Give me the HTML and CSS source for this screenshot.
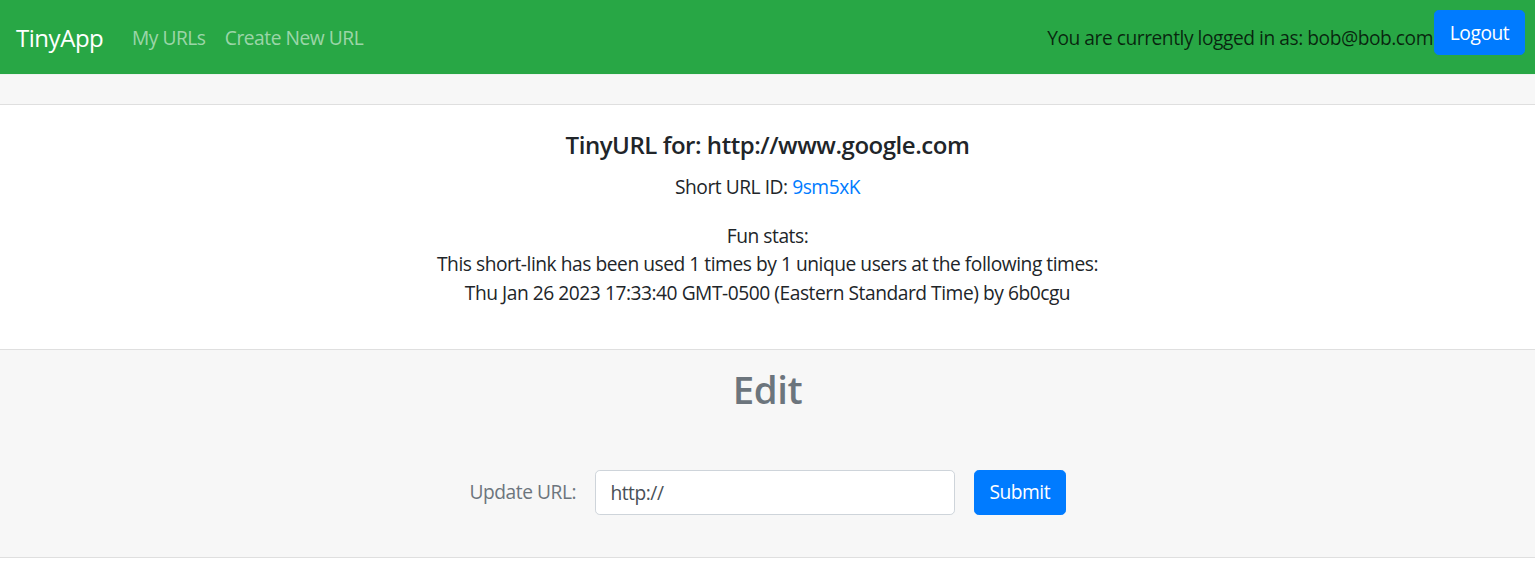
FILE: index.html
```html
<!DOCTYPE html>
<html lang="en">
<head>
<meta charset="utf-8">
<title>TinyApp</title>
<link rel="stylesheet" href="styles.css">
</head>
<body>
<nav class="navbar">
  <a class="brand" href="#">TinyApp</a>
  <div class="nav-links">
    <a class="nav-link" href="#">My URLs</a>
    <a class="nav-link" href="#">Create New URL</a>
  </div>
  <div class="nav-right">
    <span class="nav-text">You are currently logged in as: bob@bob.com</span>
    <button class="btn btn-primary btn-logout" type="button">Logout</button>
  </div>
</nav>
<main class="card">
  <div class="card-header"></div>
  <div class="card-body">
    <h5 class="card-title">TinyURL for: http://www.google.com</h5>
    <p class="short-id">Short URL ID: <a class="link" href="#">9sm5xK</a></p>
    <p class="stats">Fun stats:<br>This short-link has been used 1 times by 1 unique users at the following times:<br>Thu Jan 26 2023 17:33:40 GMT-0500 (Eastern Standard Time) by 6b0cgu</p>
  </div>
  <div class="card-footer">
    <h2 class="edit-title">Edit</h2>
    <form class="edit-form">
      <label class="form-label" for="longURL">Update URL:</label>
      <input class="form-input" id="longURL" type="text" value="http://">
      <button class="btn btn-primary" type="submit">Submit</button>
    </form>
  </div>
</main>
</body>
</html>
```
FILE: styles.css
```css
* { box-sizing: border-box; }
body {
  margin: 0;
  font-family: "Open Sans", "Noto Sans", sans-serif;
  font-size: 19.2px;
  line-height: 28.8px;
  letter-spacing: -0.024em;
  color: #212529;
  background: #fff;
}
a { text-decoration: none; }

.navbar {
  display: flex;
  align-items: center;
  height: 74px;
  padding: 0 10px 0 16px;
  background: #28a745;
}
.brand {
  font-size: 24px;
  line-height: 30px;
  color: #fff;
  margin-right: 19px;
  padding-top: 1px;
}
.nav-links { display: flex; padding-top: 2px; }
.nav-link {
  color: rgba(255, 255, 255, 0.55);
  padding: 0 9.6px;
}
.nav-right {
  margin-left: auto;
  display: flex;
  align-items: flex-start;
  align-self: stretch;
}
.nav-text {
  color: rgba(0, 0, 0, 0.78);
  margin-top: 24px;
  margin-right: 1px;
}
.btn {
  font-family: inherit;
  font-size: 19.2px;
  line-height: 28.8px;
  letter-spacing: -0.024em;
  border: 1px solid transparent;
  border-radius: 4.8px;
  padding: 7.2px 14.4px;
  height: 45px;
  cursor: pointer;
}
.btn-primary {
  background: #007bff;
  border-color: #007bff;
  color: #fff;
}
.btn-logout {
  margin-top: 10px;
  width: 91px;
  padding-top: 8px;
}

.card {
  display: block;
  border-top: 1px solid #eef3ef;
  border-bottom: 1px solid #dfdfdf;
}
.card-header {
  height: 30px;
  background: #f7f7f7;
  border-bottom: 1px solid #dfdfdf;
}
.card-body {
  text-align: center;
  padding: 25.6px 24px 21px;
  height: 244px;
}
.card-title {
  margin: 0 0 13.2px;
  font-size: 24px;
  line-height: 28.8px;
  font-weight: 600;
}
.short-id { margin: 0 0 20.2px; }
.stats { margin: 0; }
.link { color: #007bff; }

.card-footer {
  background: #f7f7f7;
  border-top: 1px solid #dfdfdf;
  height: 208px;
  padding-top: 16px;
  text-align: center;
}
.edit-title {
  margin: 0;
  font-size: 38.4px;
  line-height: 46px;
  font-weight: 600;
  color: #6c757d;
}
.edit-form {
  display: flex;
  justify-content: center;
  align-items: center;
  gap: 19px;
  margin-top: 58px;
}
.form-label { color: #6c757d; }
.form-input {
  width: 360px;
  height: 45px;
  font-family: inherit;
  font-size: 19.2px;
  letter-spacing: -0.024em;
  color: #495057;
  padding: 7.2px 14.4px;
  border: 1px solid #ced4da;
  border-radius: 4.8px;
  background: #fff;
}
```
